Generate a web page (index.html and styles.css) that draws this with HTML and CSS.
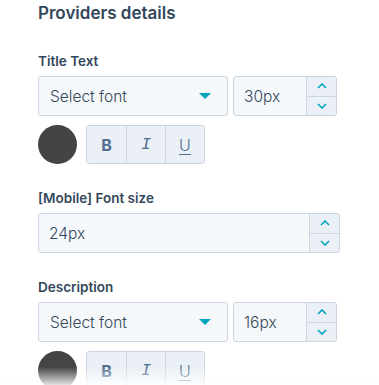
FILE: index.html
```html
<!DOCTYPE html>
<html lang="en">
<head>
  <meta charset="UTF-8" />
  <title>Providers details</title>
  <link rel="stylesheet" href="styles.css">
</head>
<body>
  <div class="panel">
    <h2 class="panel-title">Providers details</h2>

    <div class="field">
      <label class="field-label">Title Text</label>
      <div class="font-row">
        <div class="select">
          <span>Select font</span>
          <span class="caret"></span>
        </div>
        <div class="number">
          <span class="number-value">30px</span>
          <div class="stepper">
            <button class="step"><svg width="10" height="6" viewBox="0 0 10 6"><path d="M1 5 L5 1 L9 5" fill="none" stroke="#00a4bd" stroke-width="1.6"/></svg></button>
            <button class="step"><svg width="10" height="6" viewBox="0 0 10 6"><path d="M1 1 L5 5 L9 1" fill="none" stroke="#00a4bd" stroke-width="1.6"/></svg></button>
          </div>
        </div>
      </div>
      <div class="style-row">
        <span class="swatch"></span>
        <div class="btn-group">
          <button class="fmt fmt-b">B</button>
          <button class="fmt fmt-i">I</button>
          <button class="fmt fmt-u">U</button>
        </div>
      </div>
    </div>

    <div class="field">
      <label class="field-label">[Mobile] Font size</label>
      <div class="number number-wide">
        <span class="number-value">24px</span>
        <div class="stepper">
          <button class="step"><svg width="10" height="6" viewBox="0 0 10 6"><path d="M1 5 L5 1 L9 5" fill="none" stroke="#00a4bd" stroke-width="1.6"/></svg></button>
          <button class="step"><svg width="10" height="6" viewBox="0 0 10 6"><path d="M1 1 L5 5 L9 1" fill="none" stroke="#00a4bd" stroke-width="1.6"/></svg></button>
        </div>
      </div>
    </div>

    <div class="field">
      <label class="field-label">Description</label>
      <div class="font-row">
        <div class="select">
          <span>Select font</span>
          <span class="caret"></span>
        </div>
        <div class="number">
          <span class="number-value">16px</span>
          <div class="stepper">
            <button class="step"><svg width="10" height="6" viewBox="0 0 10 6"><path d="M1 5 L5 1 L9 5" fill="none" stroke="#00a4bd" stroke-width="1.6"/></svg></button>
            <button class="step"><svg width="10" height="6" viewBox="0 0 10 6"><path d="M1 1 L5 5 L9 1" fill="none" stroke="#00a4bd" stroke-width="1.6"/></svg></button>
          </div>
        </div>
      </div>
      <div class="style-row">
        <span class="swatch"></span>
        <div class="btn-group">
          <button class="fmt fmt-b">B</button>
          <button class="fmt fmt-i">I</button>
          <button class="fmt fmt-u">U</button>
        </div>
      </div>
    </div>
  </div>

  <div class="fade"></div>
</body>
</html>
```

FILE: styles.css
```css
:root {
  --text: #33475b;
  --muted: #516f90;
  --border: #cbd6e2;
  --input-bg: #f5f8fa;
  --btn-bg: #eaf0f6;
  --teal: #00a4bd;
}

*, *::before, *::after {
  box-sizing: border-box;
  margin: 0;
  padding: 0;
}

body {
  font-family: Inter, 'Open Sans', sans-serif;
  color: var(--text);
  background: #fff;
  overflow: hidden;
}

.panel {
  padding: 3px 0 0 38px;
  width: 340px;
}

.panel-title {
  font-size: 17px;
  font-weight: 600;
  line-height: 20px;
  margin-bottom: 29px;
}

.field {
  display: flex;
  flex-direction: column;
  margin-bottom: 25px;
}

.field-label {
  font-size: 13.5px;
  font-weight: 600;
  line-height: 18px;
  margin-bottom: 6px;
}

.font-row {
  display: flex;
  gap: 5px;
}

.select {
  width: 190px;
  height: 40px;
  display: flex;
  align-items: center;
  justify-content: space-between;
  padding: 0 16px 0 11px;
  background: var(--input-bg);
  border: 1px solid var(--border);
  border-radius: 3px;
  font-size: 15.5px;
  font-weight: 300;
}

.caret {
  width: 0;
  height: 0;
  border-left: 6px solid transparent;
  border-right: 6px solid transparent;
  border-top: 6px solid var(--teal);
}

.number {
  width: 104px;
  height: 40px;
  display: flex;
  background: var(--input-bg);
  border: 1px solid var(--border);
  border-radius: 3px;
  overflow: hidden;
}

.number-wide {
  width: 302px;
}

.number-value {
  flex: 1;
  display: flex;
  align-items: center;
  padding-left: 10px;
  font-size: 15.5px;
  font-weight: 300;
}

.stepper {
  width: 30px;
  display: flex;
  flex-direction: column;
  border-left: 1px solid var(--border);
  background: var(--btn-bg);
}

.step {
  flex: 1;
  display: flex;
  align-items: center;
  justify-content: center;
  background: none;
  border: none;
}

.step + .step {
  border-top: 1px solid var(--border);
}

.style-row {
  display: flex;
  align-items: center;
  gap: 9px;
  margin-top: 9px;
}

.swatch {
  width: 39px;
  height: 39px;
  border-radius: 50%;
  background: #444;
}

.btn-group {
  display: flex;
  border: 1px solid var(--border);
  border-radius: 3px;
  overflow: hidden;
}

.fmt {
  width: 39px;
  height: 37px;
  background: var(--btn-bg);
  border: none;
  color: var(--muted);
  font-family: Inter, sans-serif;
  font-size: 16px;
}

.fmt + .fmt {
  border-left: 1px solid var(--border);
}

.fmt-b {
  font-weight: 700;
}

.fmt-i {
  font-style: italic;
  font-family: 'Liberation Mono', monospace;
  font-size: 17px;
}

.fmt-u {
  text-decoration: underline;
  text-underline-offset: 3px;
  font-weight: 300;
}

.fade {
  position: fixed;
  left: 0;
  right: 0;
  bottom: 0;
  height: 18px;
  background: linear-gradient(to bottom, rgba(255,255,255,0), rgba(255,255,255,0.85));
}
```
